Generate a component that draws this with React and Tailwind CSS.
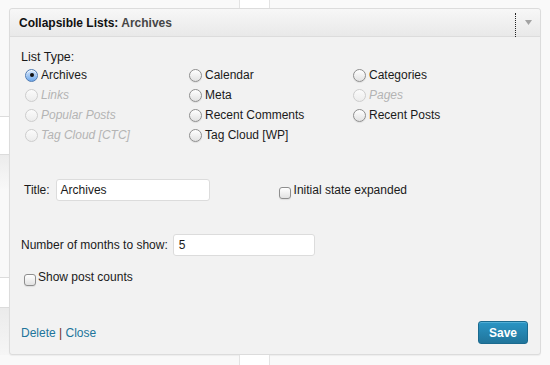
import React from "react";

const Radio = ({ checked, disabled }) => {
  if (checked) {
    return (
      <span className="w-[13px] h-[13px] rounded-full border border-[#4f7bb3] bg-linear-to-b from-[#d4e6fb] to-[#6fa8ea] shadow-[inset_0_1px_1px_rgba(255,255,255,0.8)] flex items-center justify-center shrink-0">
        <span className="w-[4px] h-[4px] rounded-full bg-[#111]" />
      </span>
    );
  }
  return (
    <span
      className={
        disabled
          ? "w-[13px] h-[13px] rounded-full border border-[#cdcdcd] bg-linear-to-b from-[#fbfbfb] to-[#ececec] shrink-0"
          : "w-[13px] h-[13px] rounded-full border border-[#8e8e8e] bg-linear-to-b from-white to-[#e2e2e2] shadow-[0_1px_1px_rgba(0,0,0,0.08)] shrink-0"
      }
    />
  );
};

const Check = () => (
  <span className="block w-[12px] h-[12px] rounded-[3px] border border-[#8e8e8e] bg-linear-to-b from-white to-[#e2e2e2] shadow-[0_1px_1px_rgba(0,0,0,0.08)] shrink-0" />
);

const Opt = ({ label, checked, disabled }) => (
  <div className="h-[20px] flex items-center gap-[3px]">
    <Radio checked={checked} disabled={disabled} />
    <span className={disabled ? "italic text-[#b4b4b4]" : "text-[#1a1a1a]"}>{label}</span>
  </div>
);

export default function App() {
  return (
    <div className="w-[550px] h-[365px] bg-[#f9f9f9] overflow-hidden font-['Liberation_Sans',Arial,Helvetica,sans-serif] text-[12px] leading-[16px] text-[#1a1a1a]">
      {/* top band */}
      <div className="h-[8px] flex">
        <div className="w-[239px]" />
        <div className="w-[31px] h-full bg-white border-x border-[#e3e3e3]" />
      </div>

      <div className="flex h-[347px]">
        {/* left background strip */}
        <div className="w-[9px] flex flex-col">
          <div className="h-[108px]" />
          <div className="h-[38px] bg-white border-t border-[#dcdcdc]" />
          <div className="h-[36px] border-t border-[#dcdcdc] bg-linear-to-b from-[#ececec] to-[#f9f9f9]" />
          <div className="h-[87px]" />
          <div className="h-[30px] bg-white border-t border-[#dcdcdc]" />
          <div className="flex-1 border-t border-[#dcdcdc] bg-linear-to-b from-[#ebebeb] to-[#f6f6f6]" />
        </div>

        {/* panel */}
        <div className="w-[532px] h-[347px] flex flex-col border border-[#dcdcdc] rounded-[3px] bg-[#f2f2f2] shadow-[0_1px_1px_rgba(0,0,0,0.05)]">
          <div className="h-[28px] shrink-0 flex items-center pl-[9px] border-b border-[#dcdcdc] bg-linear-to-b from-[#f7f7f7] to-[#e9e9e9] rounded-t-[3px]">
            <span className="font-bold text-[#111]">
              Collapsible Lists: <span className="text-[#464646]">Archives</span>
            </span>
            <div className="ml-auto h-[24px] mt-[4px] border-l border-dotted border-[#222]" />
            <div className="w-[24px] flex justify-center">
              <svg width="7" height="5" viewBox="0 0 7 5">
                <path d="M0 0 L7 0 L3.5 5 Z" fill="#a3a3a3" />
              </svg>
            </div>
          </div>

          <div className="flex-1 flex flex-col pl-[11px] pt-[12px]">
            <div className="text-[#1a1a1a] text-[12.5px]">List Type:</div>
            <div className="grid grid-cols-[164px_164px_1fr] pl-[4px]">
              <Opt label="Archives" checked />
              <Opt label="Calendar" />
              <Opt label="Categories" />
              <Opt label="Links" disabled />
              <Opt label="Meta" />
              <Opt label="Pages" disabled />
              <Opt label="Popular Posts" disabled />
              <Opt label="Recent Comments" />
              <Opt label="Recent Posts" />
              <Opt label="Tag Cloud [CTC]" disabled />
              <Opt label="Tag Cloud [WP]" />
            </div>

            <div className="mt-[34px] h-[22px] flex items-center pl-[3px]">
              <span>Title:</span>
              <div className="ml-[6px] w-[154px] h-[22px] bg-white border border-[#dcdcdc] rounded-[3px] flex items-center pl-[4px]">
                Archives
              </div>
              <div className="ml-[69px] flex items-center gap-[3px]">
                <span className="block mt-[5px]">
                  <Check />
                </span>
                <span>Initial state expanded</span>
              </div>
            </div>

            <div className="mt-[33px] h-[22px] flex items-center">
              <span>Number of months to show:</span>
              <div className="ml-[5px] w-[142px] h-[22px] bg-white border border-[#dcdcdc] rounded-[3px] flex items-center pl-[5px]">
                5
              </div>
            </div>

            <div className="mt-[13px] h-[16px] flex items-center gap-[2px] pl-[3px]">
              <span className="block mt-[5px]">
                <Check />
              </span>
              <span>Show post counts</span>
            </div>

            <div className="mt-auto pb-[10px] pr-[12px] flex items-center justify-between">
              <div className="text-[#21759b]">
                Delete <span className="text-[#6b2e1c]">|</span> Close
              </div>
              <button className="w-[50px] h-[23px] rounded-[3px] border border-[#1b6a8f] bg-linear-to-b from-[#2a95c5] to-[#21759b] text-white font-bold text-[12px] shadow-[inset_0_1px_0_rgba(120,200,230,0.5)]">
                Save
              </button>
            </div>
          </div>
        </div>
      </div>

      {/* bottom band */}
      <div className="h-[10px] flex">
        <div className="w-[239px]" />
        <div className="w-[31px] h-full bg-white border-x border-[#e3e3e3]" />
      </div>
    </div>
  );
}
